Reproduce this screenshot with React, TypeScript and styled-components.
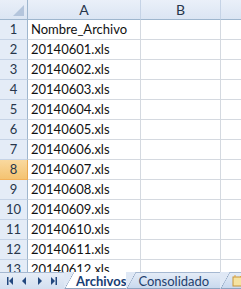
import React from 'react';
import styled, { createGlobalStyle } from 'styled-components';

const GlobalStyle = createGlobalStyle`
    body {
        margin: 0;
        background: #ffffff;
        font-family: "Lato", "Liberation Sans", sans-serif;
    }
`

const Workbook = styled.div`
    width: 241px;
    height: 289px;
    display: flex;
    flex-direction: column;
    overflow: hidden;
    background: #ffffff;
`

const Sheet = styled.div`
    height: 272px;
    display: grid;
    grid-template-columns: 28px 113px 80px 40px;
    grid-auto-rows: 20px;
    overflow: hidden;
    flex-shrink: 0;
`

const Corner = styled.div`
    position: relative;
    box-sizing: border-box;
    background: linear-gradient(#e9eff8, #dbe5f3);
    border-right: 1px solid #9eb6ce;
    border-bottom: 1px solid #9eb6ce;
    &::after {
        content: '';
        position: absolute;
        right: 3px;
        bottom: 3px;
        border-style: solid;
        border-width: 0 0 11px 11px;
        border-color: transparent transparent #b4c5dc transparent;
    }
`

const ColHeader = styled.div`
    box-sizing: border-box;
    display: flex;
    align-items: center;
    justify-content: center;
    background: linear-gradient(#eaf0f9, #dbe5f3);
    border-right: 1px solid #c5d3e6;
    border-bottom: 1px solid #9eb6ce;
    font-size: 14px;
    color: #27364b;
`

const RowHeader = styled.div<{ $selected?: boolean }>`
    box-sizing: border-box;
    display: flex;
    align-items: flex-end;
    justify-content: center;
    padding-bottom: 2px;
    background: ${p => p.$selected ? 'linear-gradient(#f9d99f, #f4c371)' : '#e4ecf7'};
    border-right: 1px solid ${p => p.$selected ? '#e9a950' : '#9eb6ce'};
    border-bottom: 1px solid ${p => p.$selected ? '#f2b15a' : '#c5d3e6'};
    font-size: 13px;
    line-height: 16px;
    color: #27364b;
`

const Cell = styled.div`
    box-sizing: border-box;
    display: flex;
    align-items: flex-end;
    padding: 0 0 2px 3px;
    border-right: 1px solid #d4d9e0;
    border-bottom: 1px solid #d4d9e0;
    font-size: 13px;
    line-height: 16px;
    color: #111111;
    white-space: nowrap;
    overflow: hidden;
`

const TabBar = styled.div`
    height: 17px;
    flex-shrink: 0;
    display: flex;
    box-sizing: border-box;
    background: linear-gradient(#e6edf7, #d3dff0);
    border-top: 1px solid #a5b8d1;
`

const Nav = styled.div`
    width: 64px;
    display: flex;
    align-items: center;
    justify-content: space-around;
    padding: 0 3px;
    box-sizing: border-box;
    flex-shrink: 0;
`

const NavIcon = styled.svg`
    width: 7px;
    height: 8px;
    fill: #23487f;
`

const Tabs = styled.div`
    display: flex;
    align-items: stretch;
    margin-top: -1px;
`

const Tab = styled.div<{ $active?: boolean }>`
    position: relative;
    display: flex;
    align-items: center;
    padding: 0 ${p => p.$active ? '10px' : '21px'} 0 12px;
    margin-left: -10px;
    background: ${p => p.$active ? '#ffffff' : 'linear-gradient(#e4ecf7, #c9d9ee)'};
    border-bottom: 1px solid #8ea4c1;
    border-top: 1px solid ${p => p.$active ? '#ffffff' : '#a5b8d1'};
    font-size: 13px;
    font-weight: ${p => p.$active ? 700 : 400};
    color: ${p => p.$active ? '#173d74' : '#1f3f6c'};
    white-space: nowrap;
    &::before {
        content: '';
        position: absolute;
        left: 0;
        top: -1px;
        width: 10px;
        height: 18px;
        background: linear-gradient(to bottom right, transparent calc(50% - 0.5px), #8ea4c1 50%, transparent calc(50% + 0.7px));
    }
    &:first-child {
        margin-left: 0;
    }
`

const Slant = styled.span`
    position: absolute;
    left: 0;
    top: -1px;
    width: 10px;
    height: 18px;
    background: linear-gradient(to bottom right, #dfe8f5 calc(50% - 0.5px), transparent 50%);
`

const AddTab = styled(Tab)`
    padding: 0 0 0 12px;
`

const rows = [
    'Nombre_Archivo',
    '20140601.xls',
    '20140602.xls',
    '20140603.xls',
    '20140604.xls',
    '20140605.xls',
    '20140606.xls',
    '20140607.xls',
    '20140608.xls',
    '20140609.xls',
    '20140610.xls',
    '20140611.xls',
    '20140612.xls',
]

const App = () => {
    return (
        <Workbook>
            <GlobalStyle />
            <Sheet>
                <Corner />
                <ColHeader>A</ColHeader>
                <ColHeader>B</ColHeader>
                <ColHeader />
                {rows.map((text, i) => (
                    <React.Fragment key={i}>
                        <RowHeader $selected={i === 7}>{i + 1}</RowHeader>
                        <Cell>{text}</Cell>
                        <Cell />
                        <Cell />
                    </React.Fragment>
                ))}
            </Sheet>
            <TabBar>
                <Nav>
                    <NavIcon viewBox="0 0 7 8"><rect x="0" y="0" width="1.5" height="8" /><path d="M6 0 L2 4 L6 8 Z" /></NavIcon>
                    <NavIcon viewBox="0 0 7 8"><path d="M5 0 L1 4 L5 8 Z" /></NavIcon>
                    <NavIcon viewBox="0 0 7 8"><path d="M2 0 L6 4 L2 8 Z" /></NavIcon>
                    <NavIcon viewBox="0 0 7 8"><path d="M1 0 L5 4 L1 8 Z" /><rect x="5.5" y="0" width="1.5" height="8" /></NavIcon>
                </Nav>
                <Tabs>
                    <Tab $active><Slant />Archivos</Tab>
                    <Tab><Slant />Consolidado</Tab>
                    <AddTab>
                        <Slant />
                        <svg width="12" height="12" viewBox="0 0 12 12">
                            <rect x="1" y="2" width="9" height="9" fill="#f6e3a1" stroke="#c8953a" />
                            <path d="M3 2 L3 0 M8 2 L10 0" stroke="#e2a33a" />
                        </svg>
                    </AddTab>
                </Tabs>
            </TabBar>
        </Workbook>
    );
};

export default App;
